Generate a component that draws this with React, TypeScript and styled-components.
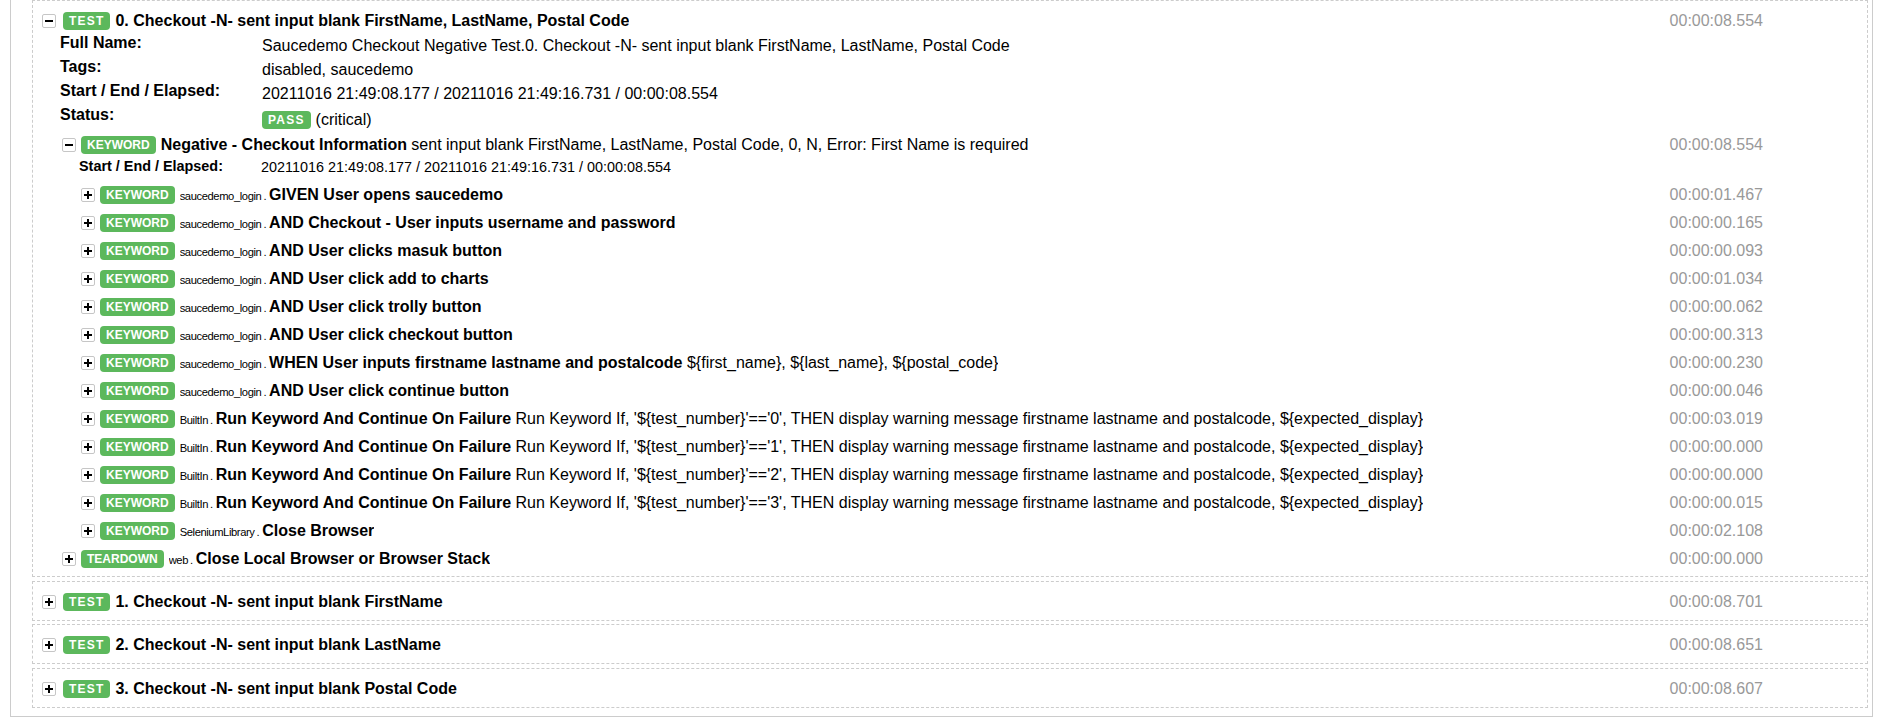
import React from "react";
import styled, { createGlobalStyle } from "styled-components";

const GlobalStyle = createGlobalStyle`
  html, body { margin: 0; padding: 0; background: #fff; }
  body {
    font-family: "Liberation Sans", Arial, Helvetica, sans-serif;
    color: #000;
    font-size: 16px;
  }
`;

const Page = styled.div`
  padding: 0 5px 0 10px;
`;

const SuiteChildren = styled.div`
  border: 1px solid #ccc;
  border-top: none;
  padding: 0 4px 8px 21px;
  display: flex;
  flex-direction: column;
  gap: 3.5px;
`;

const TestBox = styled.div<{ $open?: boolean }>`
  border: 1px dashed #ccc;
  padding: 8px 104px ${(p) => (p.$open ? 3 : 6)}px 9px;
`;

const HeaderRow = styled.div<{ $h: number }>`
  display: flex;
  align-items: center;
  height: ${(p) => p.$h}px;
  white-space: nowrap;
`;

const ToggleBox = styled.span<{ $gap: number }>`
  flex: none;
  display: inline-flex;
  align-items: center;
  justify-content: center;
  box-sizing: border-box;
  width: 14px;
  height: 14px;
  border: 1px solid #c6c6c6;
  border-radius: 2px;
  background: #fff;
  margin-right: ${(p) => p.$gap}px;
`;

const Label = styled.span<{ $spaced?: boolean }>`
  flex: none;
  display: inline-flex;
  align-items: center;
  height: 18px;
  padding: 0 6px;
  background: #5cb85c;
  color: #fff;
  font-weight: bold;
  font-size: 12px;
  letter-spacing: ${(p) => (p.$spaced ? "1.2px" : "0")};
  border-radius: 4px;
`;

const NameLine = styled.span`
  margin-left: 5px;
  overflow: hidden;
`;

const Title = styled.span`
  font-weight: bold;
  font-size: 16px;
`;

const ParentName = styled.span`
  font-size: 11.2px;
  letter-spacing: -0.4px;
`;

const Dot = styled.span`
  padding: 0 3px 0 2px;
`;

const Args = styled.span`
  font-size: 16px;
`;

const Elapsed = styled.span`
  margin-left: auto;
  padding-left: 20px;
  color: #999;
  font-size: 16px;
`;

const TestChildren = styled.div`
  margin-left: 18px;
`;

const MetaTable = styled.div<{ $labelW: number }>`
  display: grid;
  grid-template-columns: ${(p) => p.$labelW}px 1fr;
  white-space: nowrap;
`;

const MetaLabel = styled.div<{ $size: number; $lh: number; $h: number }>`
  font-weight: bold;
  font-size: ${(p) => p.$size}px;
  line-height: ${(p) => p.$lh}px;
  height: ${(p) => p.$h}px;
`;

const MetaValue = styled.div<{ $size: number; $lh: number; $pt: number }>`
  font-size: ${(p) => p.$size}px;
  line-height: ${(p) => p.$lh}px;
  padding-top: ${(p) => p.$pt}px;
`;

const StatusValue = styled.div`
  display: flex;
  align-items: center;
  gap: 5px;
  height: 20px;
  padding-top: 5px;
  font-size: 16px;
`;

const KeywordList = styled.div<{ $mt?: number }>`
  margin-top: ${(p) => p.$mt || 0}px;
`;

const KeywordBlock = styled.div`
  margin-left: 2px;
`;

const KeywordChildren = styled.div`
  margin-left: 17px;
`;

const ToggleIcon = ({ open, gap }: { open?: boolean; gap: number }) => (
  <ToggleBox $gap={gap}>
    <svg width="8" height="8" viewBox="0 0 8 8">
      <rect x="0" y="3" width="8" height="2" fill="#000" />
      {!open && <rect x="3" y="0" width="2" height="8" fill="#000" />}
    </svg>
  </ToggleBox>
);

type Kw = {
  lib: string;
  name: string;
  args?: string;
  time: string;
  label?: string;
};

const runArgs = (n: string) =>
  `Run Keyword If, '\${test_number}'=='${n}', THEN display warning message firstname lastname and postalcode, \${expected_display}`;

const keywords: Kw[] = [
  { lib: "saucedemo_login", name: "GIVEN User opens saucedemo", time: "00:00:01.467" },
  { lib: "saucedemo_login", name: "AND Checkout - User inputs username and password", time: "00:00:00.165" },
  { lib: "saucedemo_login", name: "AND User clicks masuk button", time: "00:00:00.093" },
  { lib: "saucedemo_login", name: "AND User click add to charts", time: "00:00:01.034" },
  { lib: "saucedemo_login", name: "AND User click trolly button", time: "00:00:00.062" },
  { lib: "saucedemo_login", name: "AND User click checkout button", time: "00:00:00.313" },
  {
    lib: "saucedemo_login",
    name: "WHEN User inputs firstname lastname and postalcode",
    args: "${first_name}, ${last_name}, ${postal_code}",
    time: "00:00:00.230",
  },
  { lib: "saucedemo_login", name: "AND User click continue button", time: "00:00:00.046" },
  { lib: "BuiltIn", name: "Run Keyword And Continue On Failure", args: runArgs("0"), time: "00:00:03.019" },
  { lib: "BuiltIn", name: "Run Keyword And Continue On Failure", args: runArgs("1"), time: "00:00:00.000" },
  { lib: "BuiltIn", name: "Run Keyword And Continue On Failure", args: runArgs("2"), time: "00:00:00.000" },
  { lib: "BuiltIn", name: "Run Keyword And Continue On Failure", args: runArgs("3"), time: "00:00:00.015" },
  { lib: "SeleniumLibrary", name: "Close Browser", time: "00:00:02.108" },
];

const KeywordRow = ({ kw }: { kw: Kw }) => (
  <KeywordBlock>
    <HeaderRow $h={28}>
      <ToggleIcon gap={5} />
      <Label>{kw.label || "KEYWORD"}</Label>
      <NameLine>
        {kw.lib && (
          <ParentName>
            {kw.lib}
            <Dot>.</Dot>
          </ParentName>
        )}
        <Title>{kw.name}</Title>
        {kw.args && <Args> {kw.args}</Args>}
      </NameLine>
      <Elapsed>{kw.time}</Elapsed>
    </HeaderRow>
  </KeywordBlock>
);

const collapsedTests = [
  { name: "1. Checkout -N- sent input blank FirstName", time: "00:00:08.701" },
  { name: "2. Checkout -N- sent input blank LastName", time: "00:00:08.651" },
  { name: "3. Checkout -N- sent input blank Postal Code", time: "00:00:08.607" },
];

const TestHeader = ({ open, name, time }: { open?: boolean; name: string; time: string }) => (
  <HeaderRow $h={24}>
    <ToggleIcon open={open} gap={7} />
    <Label $spaced>TEST</Label>
    <NameLine>
      <Title>{name}</Title>
    </NameLine>
    <Elapsed>{time}</Elapsed>
  </HeaderRow>
);

export default function App() {
  return (
    <>
      <GlobalStyle />
      <Page>
        <SuiteChildren>
          <TestBox $open>
            <TestHeader
              open
              name="0. Checkout -N- sent input blank FirstName, LastName, Postal Code"
              time="00:00:08.554"
            />
            <TestChildren>
              <MetaTable $labelW={202}>
                <MetaLabel $size={16} $lh={19} $h={24}>Full Name:</MetaLabel>
                <MetaValue $size={16} $lh={19} $pt={3}>
                  Saucedemo Checkout Negative Test.0. Checkout -N- sent input blank FirstName, LastName, Postal Code
                </MetaValue>
                <MetaLabel $size={16} $lh={19} $h={24}>Tags:</MetaLabel>
                <MetaValue $size={16} $lh={19} $pt={3}>disabled, saucedemo</MetaValue>
                <MetaLabel $size={16} $lh={19} $h={24}>Start / End / Elapsed:</MetaLabel>
                <MetaValue $size={16} $lh={19} $pt={3}>
                  20211016 21:49:08.177 / 20211016 21:49:16.731 / 00:00:08.554
                </MetaValue>
                <MetaLabel $size={16} $lh={19} $h={24}>Status:</MetaLabel>
                <StatusValue>
                  <Label $spaced>PASS</Label>
                  <span>(critical)</span>
                </StatusValue>
              </MetaTable>
              <KeywordList $mt={1}>
                <KeywordBlock>
                  <HeaderRow $h={28}>
                    <ToggleIcon open gap={5} />
                    <Label>KEYWORD</Label>
                    <NameLine>
                      <Title>Negative - Checkout Information</Title>
                      <Args> sent input blank FirstName, LastName, Postal Code, 0, N, Error: First Name is required</Args>
                    </NameLine>
                    <Elapsed>00:00:08.554</Elapsed>
                  </HeaderRow>
                  <KeywordChildren>
                    <MetaTable $labelW={182}>
                      <MetaLabel $size={14.4} $lh={15} $h={22}>Start / End / Elapsed:</MetaLabel>
                      <MetaValue $size={14.4} $lh={15} $pt={1}>
                        20211016 21:49:08.177 / 20211016 21:49:16.731 / 00:00:08.554
                      </MetaValue>
                    </MetaTable>
                    {keywords.map((kw, i) => (
                      <KeywordRow key={i} kw={kw} />
                    ))}
                  </KeywordChildren>
                </KeywordBlock>
                <KeywordRow
                  kw={{
                    lib: "web",
                    name: "Close Local Browser or Browser Stack",
                    time: "00:00:00.000",
                    label: "TEARDOWN",
                  }}
                />
              </KeywordList>
            </TestChildren>
          </TestBox>
          {collapsedTests.map((t) => (
            <TestBox key={t.name}>
              <TestHeader name={t.name} time={t.time} />
            </TestBox>
          ))}
        </SuiteChildren>
      </Page>
    </>
  );
}
